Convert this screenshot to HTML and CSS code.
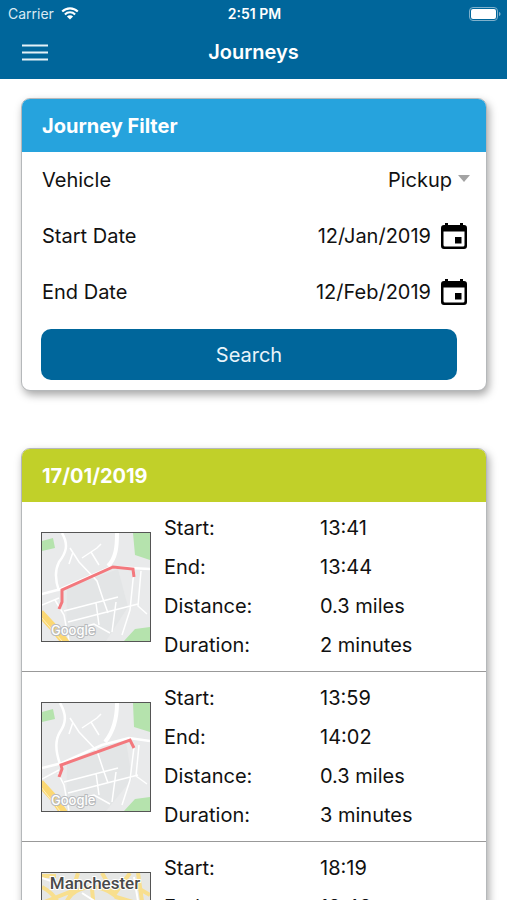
FILE: index.html
```html
<!DOCTYPE html>
<html lang="en">
<head>
<meta charset="utf-8">
<meta name="viewport" content="width=device-width, initial-scale=1">
<title>Journeys</title>
<link rel="stylesheet" href="styles.css">
</head>
<body>
<div class="app">
  <header class="topbar">
    <div class="status">
      <div class="status-carrier">
        <span>Carrier</span>
        <svg class="wifi" viewBox="0 0 18 13" aria-hidden="true">
          <path d="M1.2 4.6a11 11 0 0 1 15.6 0M3.9 7.4a7.2 7.2 0 0 1 10.2 0" fill="none" stroke="#fff" stroke-width="2.1"/>
          <path d="M9 12.6 5.9 9.5a4.4 4.4 0 0 1 6.2 0z" fill="#fff"/>
        </svg>
      </div>
      <span class="status-time">2:51 PM</span>
      <svg class="battery" viewBox="0 0 32 14" aria-hidden="true">
        <rect x=".5" y=".5" width="28" height="13" rx="3.5" fill="none" stroke="#7fb1cc"/>
        <rect x="2" y="2" width="25" height="10" rx="2" fill="#fff"/>
        <path d="M30 5c2 .6 2 3.400 0 4z" fill="#7fb1cc"/>
      </svg>
    </div>
    <div class="nav">
      <button class="menu" type="button" aria-label="Menu">
        <svg viewBox="0 0 26 17" aria-hidden="true"><path d="M0 1.500h26M0 8.500h26M0 15.500h26" stroke="#e3f1f8" stroke-width="2"/></svg>
      </button>
      <h1 class="title">Journeys</h1>
    </div>
  </header>

  <main class="content">
    <section class="card">
      <h2 class="card-head card-head-blue">Journey Filter</h2>
      <form class="filter">
        <div class="field">
          <label for="vehicle">Vehicle</label>
          <div class="control">
            <select id="vehicle" class="value"><option>Pickup</option></select>
            <svg class="caret" viewBox="0 0 12 7" aria-hidden="true"><path d="M0 0h12L6 7z" fill="#a3a3a3"/></svg>
          </div>
        </div>
        <div class="field">
          <label for="start">Start Date</label>
          <div class="control">
            <input id="start" class="value" type="text" value="12/Jan/2019">
            <button class="pick" type="button" aria-label="Choose start date">
              <svg viewBox="0 0 26 26" aria-hidden="true"><path fill-rule="evenodd" d="M4 0h3v2h12V0h3v2h1a3 3 0 0 1 3 3v18a3 3 0 0 1-3 3H3a3 3 0 0 1-3-3V5a3 3 0 0 1 3-3h1zM2.500 8.500V22a1.500 1.500 0 0 0 1.500 1.500h18a1.500 1.500 0 0 0 1.500-1.500V8.500zM14 14h6.500v6.500H14z"/></svg>
            </button>
          </div>
        </div>
        <div class="field">
          <label for="end">End Date</label>
          <div class="control">
            <input id="end" class="value" type="text" value="12/Feb/2019">
            <button class="pick" type="button" aria-label="Choose end date">
              <svg viewBox="0 0 26 26" aria-hidden="true"><path fill-rule="evenodd" d="M4 0h3v2h12V0h3v2h1a3 3 0 0 1 3 3v18a3 3 0 0 1-3 3H3a3 3 0 0 1-3-3V5a3 3 0 0 1 3-3h1zM2.500 8.500V22a1.500 1.500 0 0 0 1.500 1.500h18a1.500 1.500 0 0 0 1.500-1.500V8.500zM14 14h6.500v6.500H14z"/></svg>
            </button>
          </div>
        </div>
        <button class="search" type="button">Search</button>
      </form>
    </section>

    <section class="card">
      <h2 class="card-head card-head-green">17/01/2019</h2>
      <article class="journey">
        <svg class="map" viewBox="0 0 108 108" role="img" aria-label="Route map">
          <rect width="108" height="108" fill="#e9eaeb"/>
          <path d="M25 55 76 36l10 38-22 34H24z" fill="#e3e5e6"/>
          <path d="M91 0h17v27l-15-5zM0 8l11-3 2 10-13 3zM93 96l15-2v14H82z" fill="#b5e3ad"/>
          <g fill="none" stroke="#fff">
            <path d="M20 0c7 12 4 20-3 29-4 8-4 18 0 29M0 61l19-5 50-22 39 2" stroke-width="2.500"/>
            <path d="M75 0c0 14-1 25-9 33" stroke-width="4"/>
            <path d="m28 15 9 14 18 19 6 18 5 14M31 19l-4 12M40 25l15-10 4-4M49 19l8 13M13 67l9 15 5 26M22 78l54-14M26 89l70-18M30 97l22-6 16 9M54 70l3 22M74 69l-4 30M92 37l-4 40-8 25M99 38l-3 35 9 8M0 72l17-7" stroke-width="1.500"/>
          </g>
          <path d="m-2 80 12 13 14 17" fill="none" stroke="#fbd873" stroke-width="8"/>
          <path d="m-1 84 21 24" stroke="#fff0be" stroke-width="1"/>
          <path d="m17 76 3-7V57l51-23 20 2 1 8" fill="none" stroke="#f3787d" stroke-width="3"/>
          <text class="map-brand" x="9" y="102">Google</text>
        </svg>
        <dl class="facts">
          <dt>Start:</dt><dd>13:41</dd>
          <dt>End:</dt><dd>13:44</dd>
          <dt>Distance:</dt><dd>0.3 miles</dd>
          <dt>Duration:</dt><dd>2 minutes</dd>
        </dl>
      </article>
      <article class="journey">
        <svg class="map" viewBox="0 0 108 108" role="img" aria-label="Route map">
          <rect width="108" height="108" fill="#e9eaeb"/>
          <path d="M25 60 84 38l6 38-26 32H24z" fill="#e3e5e6"/>
          <path d="M91 0h17v29l-16-5zM0 9l11-3 2 10-13 3zM93 96l15-2v14H82z" fill="#b5e3ad"/>
          <g fill="none" stroke="#fff">
            <path d="M18 0c7 12 6 20 0 29-5 8-5 18 0 32M0 65l20-5 40-18 27-7 21 3" stroke-width="2.500"/>
            <path d="M75 0c0 16-3 28-12 39" stroke-width="4"/>
            <path d="m28 15 9 14 18 19 6 18 5 14M31 19l-4 12M40 25l15-10 4-4M49 19l8 13M16 70l6 12 5 26M22 79l54-14M26 90l70-18M30 98l22-6 16 9M54 70l3 22M74 69l-4 30M92 44l-4 33-8 25M97 42l-3 31 11 8M0 76l17-9" stroke-width="1.500"/>
          </g>
          <path d="m-2 80 12 13 12 17" fill="none" stroke="#fbd873" stroke-width="8"/>
          <path d="m-1 84 19 24" stroke="#fff0be" stroke-width="1"/>
          <path d="m17 74 3-8-1-4 69-25 4 8" fill="none" stroke="#f3787d" stroke-width="3"/>
          <text class="map-brand" x="9" y="102">Google</text>
        </svg>
        <dl class="facts">
          <dt>Start:</dt><dd>13:59</dd>
          <dt>End:</dt><dd>14:02</dd>
          <dt>Distance:</dt><dd>0.3 miles</dd>
          <dt>Duration:</dt><dd>3 minutes</dd>
        </dl>
      </article>
      <article class="journey">
        <svg class="map" viewBox="0 0 108 108" role="img" aria-label="Route map of Manchester">
          <rect width="108" height="108" fill="#e6e7e5"/>
          <path d="M0 14c15 8 20 20 16 34M0 30l30-12L36 0M24 30c6-16 30-22 48-8s16 26 20 40M72 22 88 0M60 0l14 24 34 10M84 8l24 14M50 16l4 40M0 3h14M96 0l4 28" fill="none" stroke="#f8df8e" stroke-width="4"/>
          <path d="M0 5l18 6M40 20l22 14M92 4l4 24" fill="none" stroke="#fff" stroke-width="2"/>
          <text class="map-city" x="53" y="16" text-anchor="middle">Manchester</text>
        </svg>
        <dl class="facts">
          <dt>Start:</dt><dd>18:19</dd>
          <dt>End:</dt><dd>18:48</dd>
        </dl>
      </article>
    </section>
  </main>
</div>
</body>
</html>
```
FILE: styles.css
```css
* {
  box-sizing: border-box;
}

body {
  margin: 0;
  background: #fff;
  color: #111;
  font-family: Inter, "Liberation Sans", sans-serif;
  font-size: 20px;
  line-height: 24px;
}

button,
input,
select {
  margin: 0;
  padding: 0;
  border: 0;
  background: none;
  color: inherit;
  font: inherit;
}

svg {
  display: block;
}

.app {
  display: flex;
  flex-direction: column;
  height: 100vh;
  overflow: hidden;
}

.topbar {
  flex: none;
  background: #00669b;
  color: #fff;
}

.status {
  display: grid;
  grid-template-columns: 1fr auto 1fr;
  align-items: center;
  height: 27px;
  padding: 0 6px 0 8px;
  font-size: 14px;
}

.status-carrier {
  display: flex;
  align-items: center;
  gap: 7px;
  color: #d9eaf3;
}

.status-time {
  font-weight: 600;
}

.wifi {
  width: 18px;
  height: 13px;
}

.battery {
  justify-self: end;
  width: 32px;
  height: 14px;
}

.nav {
  display: grid;
  grid-template-columns: 1fr auto 1fr;
  align-items: center;
  height: 52px;
  padding: 0 22px 2px;
}

.menu svg {
  width: 26px;
  height: 17px;
}

.title {
  margin: 0;
  font-size: 20px;
  font-weight: 600;
}

.content {
  display: flex;
  flex: 1;
  flex-direction: column;
  gap: 57px;
  min-height: 0;
  padding: 19px 20px 20px 21px;
  overflow-y: auto;
  scrollbar-width: none;
}

.card {
  flex: none;
  overflow: hidden;
  border: 1px solid #b5b8ba;
  border-radius: 9px;
  background: #fff;
  box-shadow: 2px 4px 8px rgba(0, 0, 0, 0.35);
}

.card-head {
  margin: 0;
  padding: 15px 20px 14px;
  color: #fff;
  font-size: 20px;
  font-weight: 700;
}

.card-head-blue {
  background: #26a3dd;
}

.card-head-green {
  background: #c1d029;
}

.filter {
  padding-bottom: 10px;
}

.field {
  display: flex;
  align-items: center;
  justify-content: space-between;
  height: 56px;
  padding: 0 19px 0 20px;
}

.control {
  display: flex;
  align-items: center;
  gap: 10px;
}

.value {
  width: 150px;
  text-align: right;
  text-align-last: right;
  appearance: none;
}

.caret {
  width: 12px;
  height: 7px;
  margin: 0 -3px 4px -4px;
}

.pick svg {
  width: 26px;
  height: 26px;
}

.search {
  display: block;
  width: calc(100% - 48px);
  height: 51px;
  margin: 9px 29px 0 19px;
  border-radius: 10px;
  background: #00669b;
  color: #e8f4fa;
}

.journey {
  display: flex;
  align-items: flex-start;
  gap: 13px;
  min-height: 170px;
  padding: 7px 19px 6px;
  border-bottom: 1px solid #999;
}

.journey:last-child {
  border-bottom: 0;
}

.map {
  flex: none;
  width: 110px;
  height: 110px;
  margin-top: 23px;
  border: 1px solid #555;
}

.map-brand {
  fill: #fff;
  stroke: #b9bbbd;
  stroke-width: 2px;
  paint-order: stroke;
  font-size: 13px;
  font-weight: 500;
}

.map-city {
  fill: #4a4a4a;
  stroke: #fff;
  stroke-width: 2px;
  paint-order: stroke;
  font-family: Roboto, sans-serif;
  font-size: 17px;
  font-weight: 500;
}

.facts {
  display: grid;
  flex: 1;
  grid-template-columns: 156px 1fr;
  margin: 0;
  line-height: 39px;
}

.facts dd {
  margin: 0;
}
```
